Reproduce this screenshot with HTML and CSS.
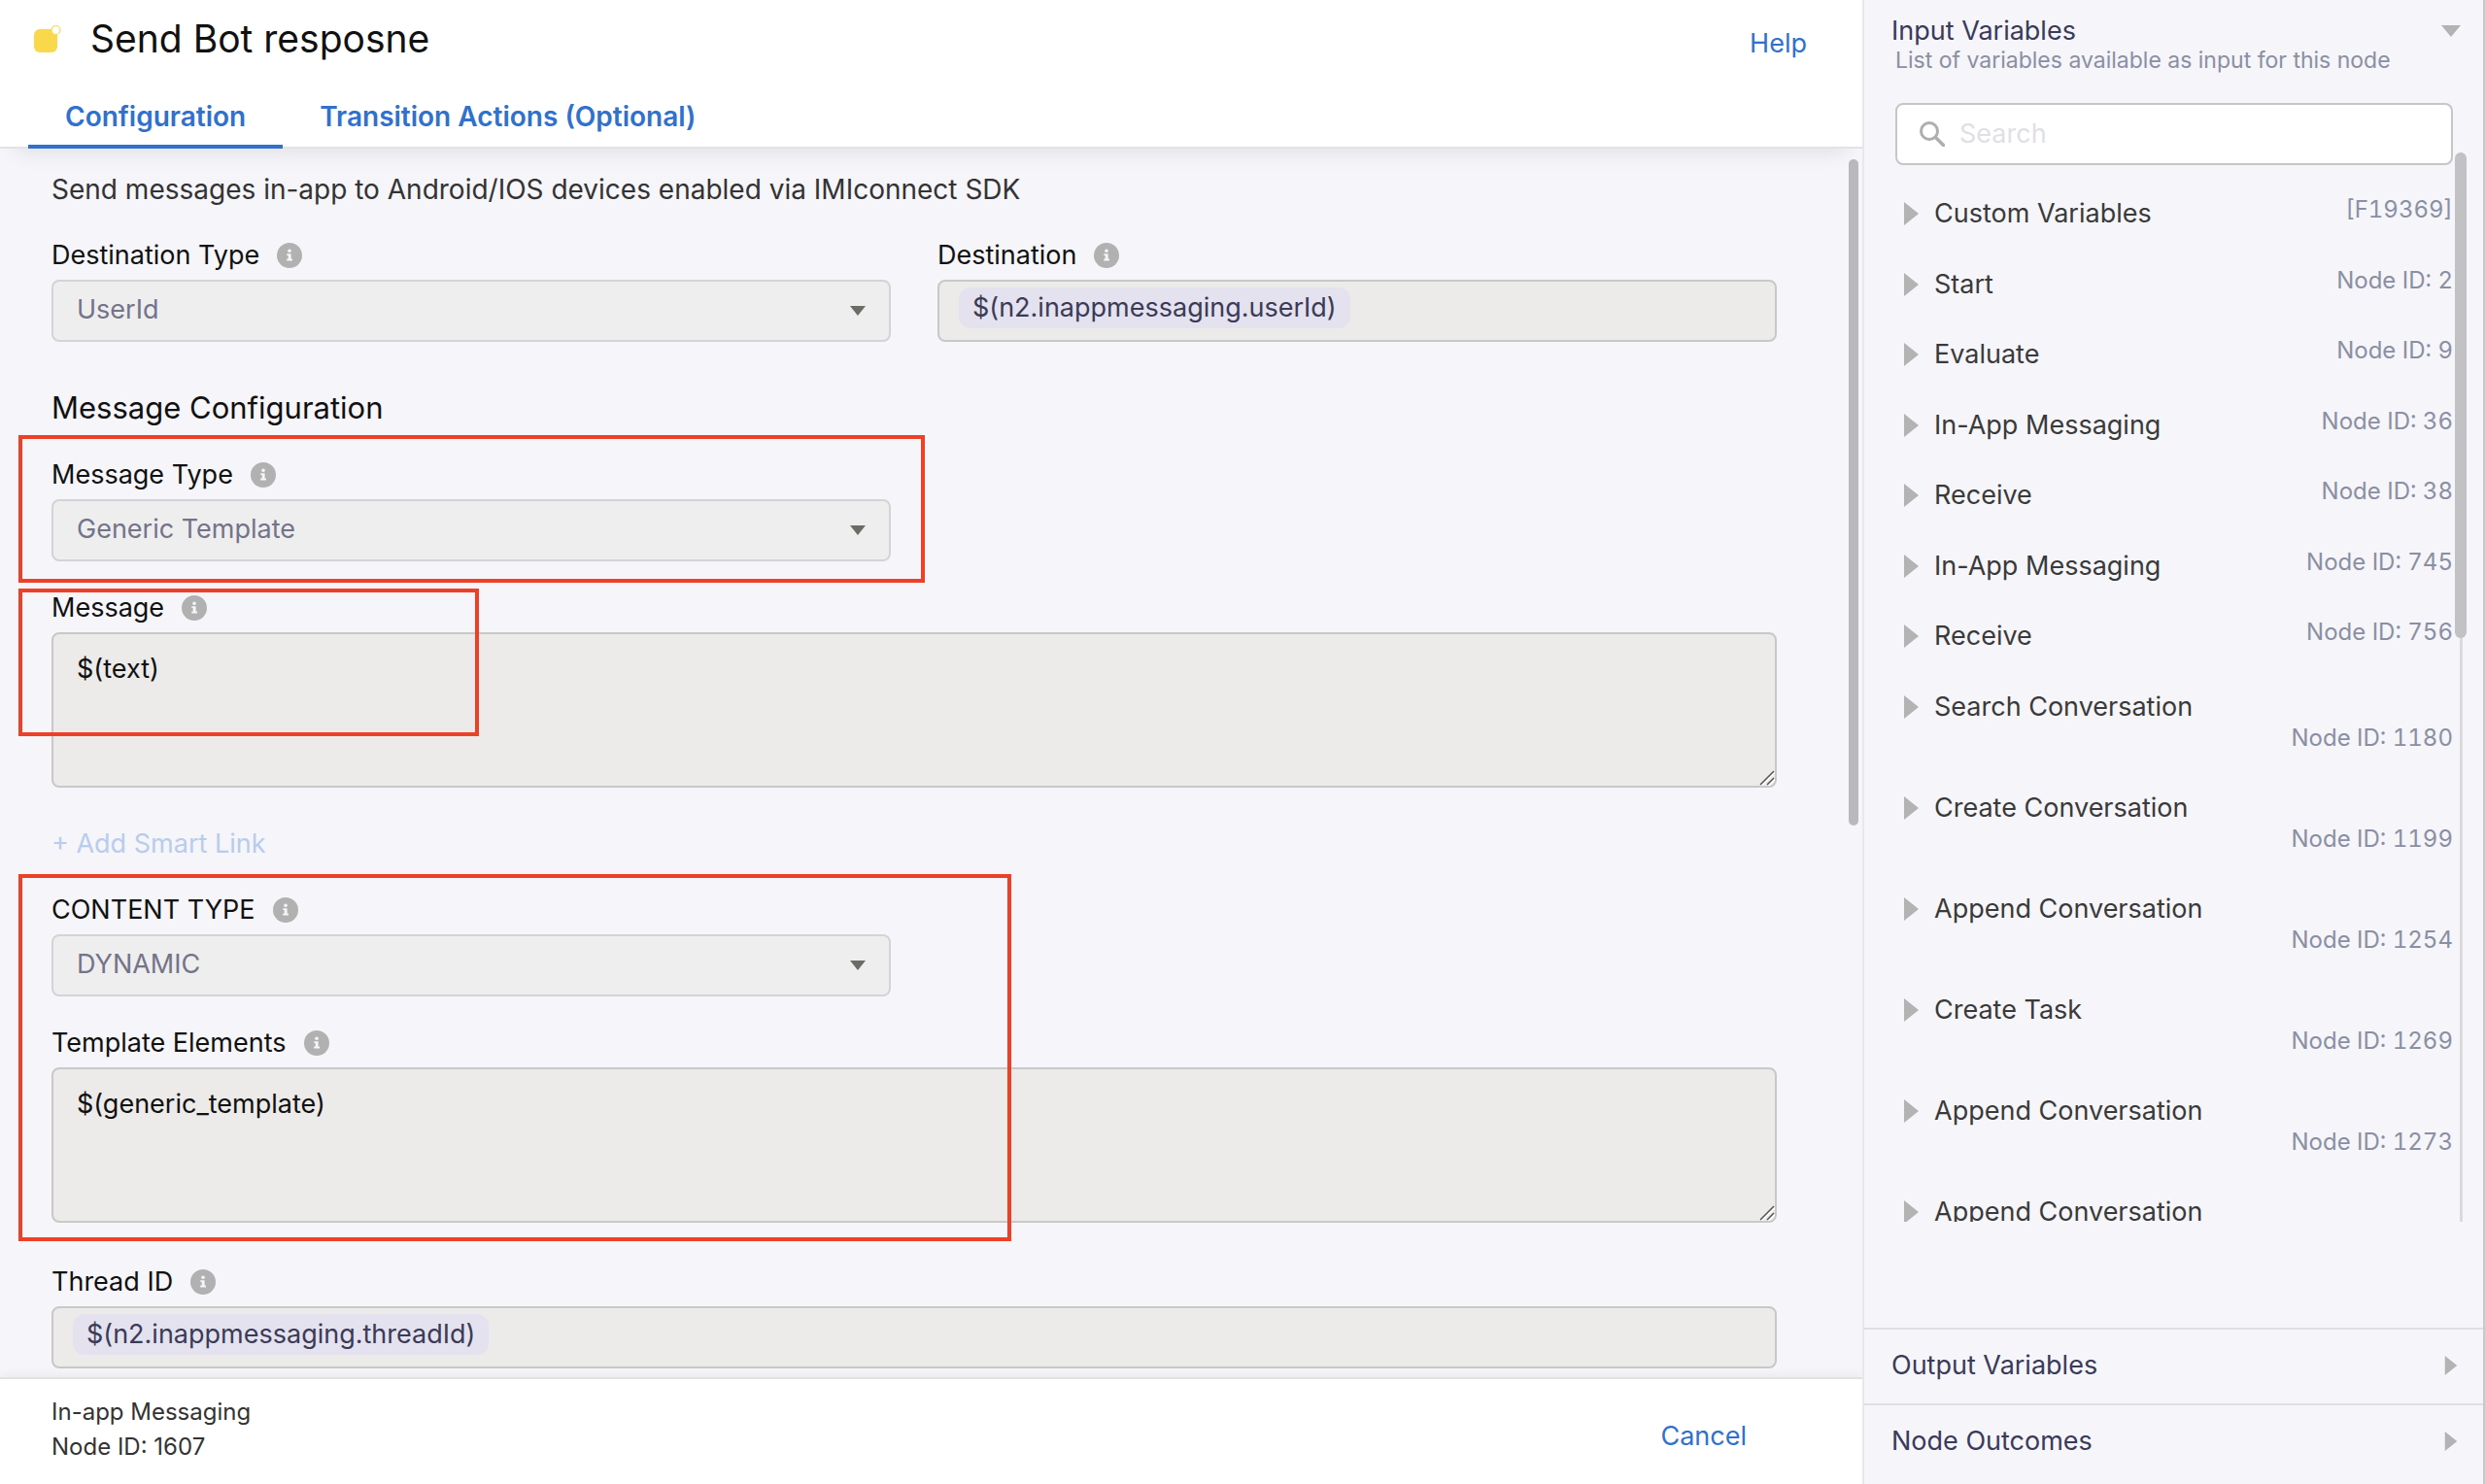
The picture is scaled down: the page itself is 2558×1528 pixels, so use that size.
FILE: index.html
```html
<!DOCTYPE html>
<html lang="en">
<head>
<meta charset="utf-8">
<meta name="viewport" content="width=device-width, initial-scale=1">
<title>Send Bot resposne</title>
<link rel="stylesheet" href="styles.css">
</head>
<body>
<svg class="defs" aria-hidden="true">
  <symbol id="info" viewBox="0 0 26 26"><circle cx="13" cy="13" r="13" fill="#b1b1b1"/><circle cx="13" cy="8.200" r="1.800" fill="#f5f5fa"/><path d="M10.300 11.200h4.300v5.400h1.400v1.800h-5.800v-1.800h1.500v-3.600h-1.400z" fill="#f5f5fa"/></symbol>
  <symbol id="caret" viewBox="0 0 16 10"><path d="M0 0h16L8 10z" fill="#6c6c67"/></symbol>
  <symbol id="right" viewBox="0 0 15 24"><path d="M0 0l15 12L0 24z" fill="#b3b3b3"/></symbol>
  <symbol id="down" viewBox="0 0 20 12"><path d="M0 0h20L10 12z" fill="#b3b3b3"/></symbol>
  <symbol id="grip" viewBox="0 0 16 16"><path d="M2.500 16L16 2.500M9.500 16L16 9.500" stroke="#fff" stroke-width="1.500"/><path d="M1 15L15 1M8 15L15 8" stroke="#555" stroke-width="1.500"/></symbol>
</svg>
<main class="editor">
  <header class="editor-head">
    <div class="title-row">
      <svg class="node-icon" viewBox="0 0 28 29"><rect x="0" y="5" width="24" height="24" rx="6" fill="#fad84c"/><circle cx="22.500" cy="6" r="4.500" fill="#fff" stroke="#fad84c" stroke-width="1.200"/></svg>
      <h1>Send Bot resposne</h1>
      <a class="link" href="#help">Help</a>
    </div>
    <nav class="tabs">
      <a class="tab active" href="#configuration">Configuration</a>
      <a class="tab" href="#transition">Transition Actions (Optional)</a>
    </nav>
  </header>

  <form class="form">
    <p class="intro">Send messages in-app to Android/IOS devices enabled via IMIconnect SDK</p>
    <div class="columns">
      <div class="field">
        <div class="label-row"><label for="dest-type">Destination Type</label><svg class="info"><use href="#info"/></svg></div>
        <div class="select"><select id="dest-type" disabled><option>UserId</option></select><svg class="caret"><use href="#caret"/></svg></div>
      </div>
      <div class="field">
        <div class="label-row"><label for="dest">Destination</label><svg class="info"><use href="#info"/></svg></div>
        <div class="token-box"><span class="token">$(n2.inappmessaging.userId)</span><input id="dest" type="text" disabled></div>
      </div>
    </div>

    <h2>Message Configuration</h2>
    <div class="columns">
      <div class="field marked">
        <div class="label-row"><label for="msg-type">Message Type</label><svg class="info"><use href="#info"/></svg></div>
        <div class="select"><select id="msg-type" disabled><option>Generic Template</option></select><svg class="caret"><use href="#caret"/></svg></div>
        <span class="mark mark-type"></span>
      </div>
    </div>
    <div class="field marked">
      <div class="label-row"><label for="message">Message</label><svg class="info"><use href="#info"/></svg></div>
      <div class="area"><textarea id="message" readonly>$(text)</textarea><svg class="grip"><use href="#grip"/></svg></div>
      <span class="mark mark-message"></span>
    </div>
    <button class="smart-link" type="button" disabled>+ Add Smart Link</button>
    <div class="group marked">
      <div class="columns">
        <div class="field">
          <div class="label-row"><label for="content-type">CONTENT TYPE</label><svg class="info"><use href="#info"/></svg></div>
          <div class="select"><select id="content-type" disabled><option>DYNAMIC</option></select><svg class="caret"><use href="#caret"/></svg></div>
        </div>
      </div>
      <div class="field">
        <div class="label-row"><label for="elements">Template Elements</label><svg class="info"><use href="#info"/></svg></div>
        <div class="area"><textarea id="elements" readonly>$(generic_template)</textarea><svg class="grip"><use href="#grip"/></svg></div>
      </div>
      <span class="mark mark-content"></span>
    </div>
    <div class="field thread">
      <div class="label-row"><label for="thread">Thread ID</label><svg class="info"><use href="#info"/></svg></div>
      <div class="token-box"><span class="token">$(n2.inappmessaging.threadId)</span><input id="thread" type="text" disabled></div>
    </div>
    <span class="form-thumb"></span>
  </form>

  <footer class="editor-foot">
    <p>In-app Messaging<br>Node ID: 1607</p>
    <button class="link cancel" type="button">Cancel</button>
  </footer>
</main>

<aside class="side">
  <section class="inputs">
    <button class="side-head" type="button">Input Variables<svg class="down"><use href="#down"/></svg></button>
    <p class="side-sub">List of variables available as input for this node</p>
    <div class="scroller">
      <div class="search">
        <svg viewBox="0 0 26 26"><circle cx="10" cy="10" r="8.500" fill="none" stroke="#aeaeae" stroke-width="3"/><path d="M16.500 16.500L24.500 24.500" stroke="#aeaeae" stroke-width="3.500" stroke-linecap="round"/></svg>
        <input type="search" placeholder="Search" aria-label="Search">
      </div>
      <ul class="vars">
        <li><button type="button"><svg class="right"><use href="#right"/></svg>Custom Variables</button><span>[F19369]</span></li>
        <li><button type="button"><svg class="right"><use href="#right"/></svg>Start</button><span>Node ID: 2</span></li>
        <li><button type="button"><svg class="right"><use href="#right"/></svg>Evaluate</button><span>Node ID: 9</span></li>
        <li><button type="button"><svg class="right"><use href="#right"/></svg>In-App Messaging</button><span>Node ID: 36</span></li>
        <li><button type="button"><svg class="right"><use href="#right"/></svg>Receive</button><span>Node ID: 38</span></li>
        <li><button type="button"><svg class="right"><use href="#right"/></svg>In-App Messaging</button><span>Node ID: 745</span></li>
        <li><button type="button"><svg class="right"><use href="#right"/></svg>Receive</button><span>Node ID: 756</span></li>
        <li class="tall"><button type="button"><svg class="right"><use href="#right"/></svg>Search Conversation</button><span>Node ID: 1180</span></li>
        <li class="tall"><button type="button"><svg class="right"><use href="#right"/></svg>Create Conversation</button><span>Node ID: 1199</span></li>
        <li class="tall"><button type="button"><svg class="right"><use href="#right"/></svg>Append Conversation</button><span>Node ID: 1254</span></li>
        <li class="tall"><button type="button"><svg class="right"><use href="#right"/></svg>Create Task</button><span>Node ID: 1269</span></li>
        <li class="tall"><button type="button"><svg class="right"><use href="#right"/></svg>Append Conversation</button><span>Node ID: 1273</span></li>
        <li class="tall"><button type="button"><svg class="right"><use href="#right"/></svg>Append Conversation</button></li>
      </ul>
      <span class="track"></span><span class="thumb"></span>
    </div>
  </section>
  <button class="side-section" type="button">Output Variables<svg><use href="#right"/></svg></button>
  <button class="side-section" type="button">Node Outcomes<svg><use href="#right"/></svg></button>
</aside>
</body>
</html>
```
FILE: styles.css
```css
* { box-sizing: border-box; margin: 0; }

body {
  display: flex;
  height: 100vh;
  overflow: hidden;
  background: #f5f5fa;
  color: #111;
  font: 27px/40px Inter, "Liberation Sans", sans-serif;
}

button, input, select, textarea { font: inherit; color: inherit; }
button { padding: 0; border: 0; background: none; text-align: left; }
svg { display: block; flex: none; }
.defs { position: absolute; width: 0; height: 0; }
.link { color: #2f71cd; text-decoration: none; }

/* Editor column */
.editor { flex: 1; min-width: 0; display: flex; flex-direction: column; }

.editor-head {
  position: relative;
  z-index: 1;
  background: #fff;
  border-bottom: 2px solid #e3e3e3;
  box-shadow: 0 20px 20px -16px rgba(0, 0, 0, 0.09);
}
.title-row { display: flex; align-items: baseline; height: 80px; padding: 12px 57px 0 35px; }
.node-icon { width: 28px; height: 29px; margin-right: 30px; }
h1 { flex: 1; font-size: 39px; line-height: 56px; font-weight: 400; }

.tabs { display: flex; padding-left: 29px; margin-bottom: -2px; }
.tab {
  padding: 20px 38px 9px;
  border-bottom: 4px solid transparent;
  color: #2f71cd;
  font-size: 28px;
  font-weight: 600;
  text-decoration: none;
}
.tab.active { border-bottom-color: #2f71cd; }

.form { position: relative; flex: 1; min-height: 0; overflow: hidden; padding: 22px 88px 0 53px; }
.intro { font-size: 28px; color: #333; }
.columns { display: grid; grid-template-columns: repeat(2, minmax(0, 1fr)); column-gap: 48px; }
h2 { margin-top: 47px; font-size: 31px; line-height: 42px; font-weight: 400; }

.field { margin-top: 28px; }
.field.thread { margin-top: 41px; }
.label-row { display: flex; align-items: center; gap: 18px; margin-bottom: 5px; }
.info { width: 26px; height: 26px; }

.select { display: grid; align-items: center; }
.select select {
  grid-area: 1 / 1;
  width: 100%;
  height: 64px;
  padding: 0 60px 2px 24px;
  border: 2px solid #d4d4d7;
  border-radius: 8px;
  background: #eee;
  color: #73738a;
  opacity: 1;
  appearance: none;
}
.caret { grid-area: 1 / 1; justify-self: end; width: 16px; height: 10px; margin-right: 26px; pointer-events: none; }

.token-box {
  display: flex;
  height: 64px;
  padding: 6px 20px;
  border: 2px solid #c8c8c8;
  border-radius: 8px;
  background: #ecebe9;
}
.token { padding: 0 14px; height: 42px; line-height: 42px; border-radius: 12px; background: #e4e2ee; color: #3b3b58; }
.token-box input { flex: 1; min-width: 0; border: 0; background: none; }

.area { position: relative; }
.grip { position: absolute; right: 2px; bottom: 2px; width: 16px; height: 16px; pointer-events: none; }
textarea {
  display: block;
  width: 100%;
  height: 160px;
  padding: 16px 24px;
  border: 2px solid #c8c8c8;
  border-radius: 8px;
  background: #ecebe9;
  resize: none;
}
.smart-link { display: block; margin-top: 38px; color: #b8cdec; }

/* Highlight frames laid over the form */
.marked { position: relative; }
.mark { position: absolute; left: -34px; border: 4px solid #ee4026; pointer-events: none; }
.mark-type { top: -21px; right: -35px; bottom: -22px; }
.mark-message { top: 0; width: 474px; height: 152px; }
.mark-content { top: 11px; bottom: -19px; width: 1022px; }

.form-thumb { position: absolute; top: 11px; right: 4px; width: 10px; height: 686px; border-radius: 5px; background: #b9b9bb; }

.editor-foot {
  position: relative;
  display: flex;
  justify-content: space-between;
  padding: 16px 119px 20px 53px;
  background: #fff;
  border-top: 2px solid #e2e2e2;
  box-shadow: 0 -4px 8px rgba(0, 0, 0, 0.04);
}
.editor-foot p { font-size: 24px; line-height: 36px; color: #333; }
.cancel { align-self: flex-end; padding-bottom: 9px; }

/* Variables sidebar */
.side {
  position: relative;
  z-index: 2;
  flex: none;
  width: 641px;
  display: flex;
  flex-direction: column;
  padding-bottom: 5px;
  background: #f5f5fa;
  border-left: 2px solid #e8e8eb;
  border-right: 2px solid #c9c9cd;
}
.inputs { flex: 1; min-height: 0; display: flex; flex-direction: column; padding: 16px 0 109px; }
.side-head {
  display: flex;
  align-items: center;
  justify-content: space-between;
  padding: 0 23px 0 28px;
  line-height: 32px;
  color: #3a3a5a;
}
.down { width: 20px; height: 12px; }
.side-sub { padding-left: 32px; font-size: 23px; line-height: 28px; color: #8a8fa3; }

.scroller { position: relative; flex: 1; min-height: 0; overflow: hidden; padding: 30px 31px 0 32px; }
.search {
  display: flex;
  align-items: center;
  gap: 15px;
  height: 64px;
  padding: 0 23px;
  border: 2px solid #c6c6c6;
  border-radius: 8px;
  background: #fff;
}
.search svg { width: 26px; height: 26px; }
.search input { flex: 1; min-width: 0; padding: 0; border: 0; background: none; outline: 0; }
.search input::placeholder { color: #dfdfe4; opacity: 1; }

.vars { padding: 14px 0 0 9px; list-style: none; }
.vars li { display: flex; justify-content: space-between; min-height: 73px; padding-top: 16px; }
.vars li:nth-child(even) { min-height: 72px; }
.vars li.tall { min-height: 104px; }
.vars button { display: flex; align-items: center; align-self: flex-start; gap: 16px; color: #3a3a3a; }
.vars span { font-size: 24px; line-height: 32px; font-variant-numeric: tabular-nums; color: #8a8fa3; }
.vars .tall span { margin-top: 36px; }
.right { width: 15px; height: 24px; }

.track { position: absolute; top: 81px; right: 21px; bottom: 0; width: 3px; background: #dadadd; }
.thumb { position: absolute; top: 81px; right: 17px; width: 12px; height: 500px; border-radius: 6px; background: #c2c2c4; }

.side-section {
  display: flex;
  align-items: center;
  justify-content: space-between;
  padding: 17px 26px 19px 28px;
  border-top: 2px solid #e0e0e4;
  color: #3a3a5a;
}
.side-section svg { width: 14px; height: 20px; }
```
